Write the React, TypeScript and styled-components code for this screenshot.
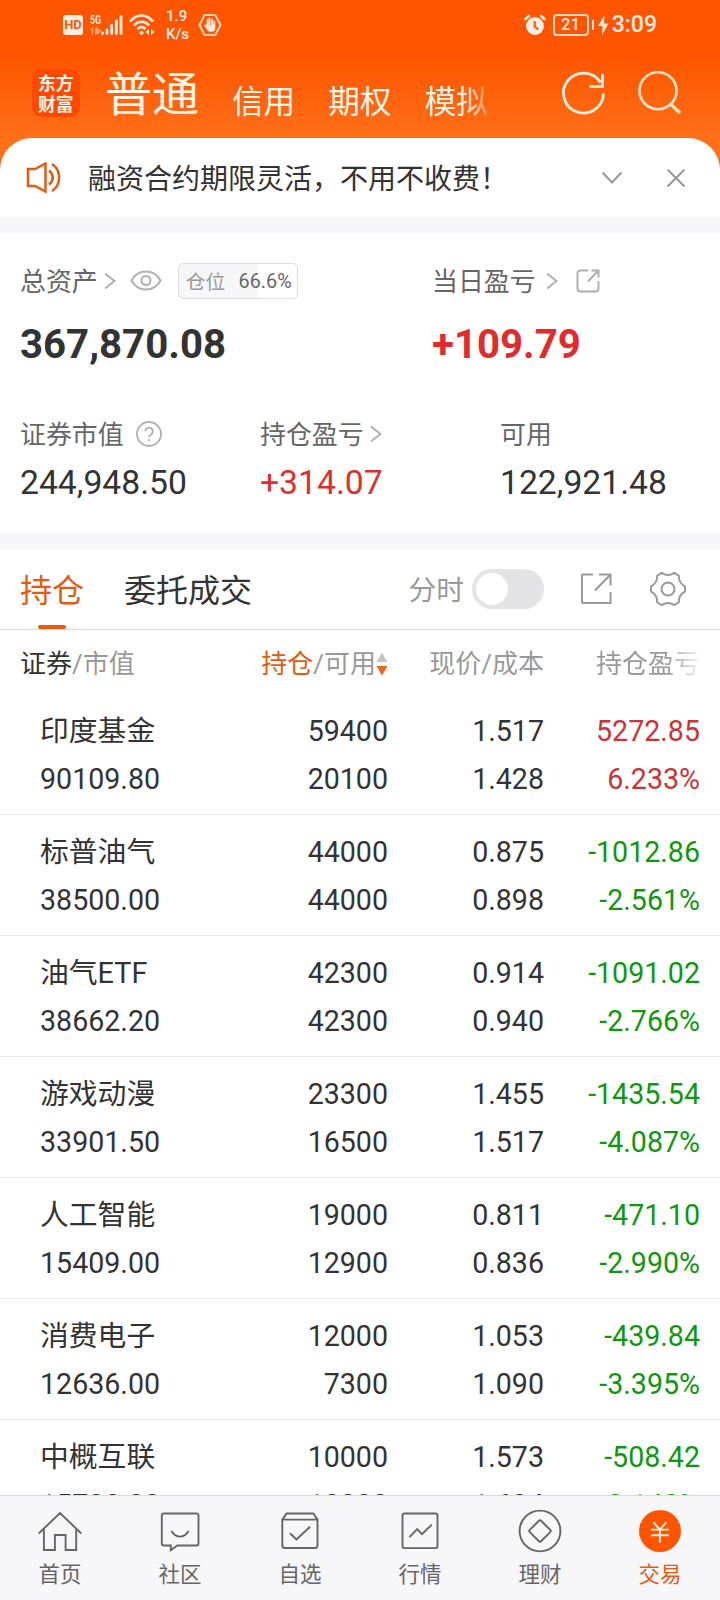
import React from "react";
import styled, { createGlobalStyle, css } from "styled-components";

const ORANGE = "#e65a10";
const RED = "#dd2f2f";
const GREEN = "#0f970f";
const INK = "#333333";
const MUTED = "#666666";
const FAINT = "#999999";

const GlobalStyle = createGlobalStyle`
  * { box-sizing: border-box; }
  body { margin: 0; background: #fff; }
`;

const Screen = styled.div`
  width: 720px;
  height: 1600px;
  overflow: hidden;
  display: flex;
  flex-direction: column;
  background: #fff;
  color: ${INK};
  font-family: Roboto, "Noto Sans CJK SC", sans-serif;
  white-space: nowrap;
`;

const Icon = styled.svg<{ $w: number; $h?: number; $stroke?: string; $sw?: number; $ml?: number }>`
  display: block;
  flex: none;
  width: ${(p) => p.$w}px;
  height: ${(p) => p.$h ?? p.$w}px;
  margin-left: ${(p) => p.$ml ?? 0}px;
  fill: none;
  stroke: ${(p) => p.$stroke ?? "none"};
  stroke-width: ${(p) => p.$sw ?? 2};
`;

/* ---------- header ---------- */

const Header = styled.header`
  flex: none;
  height: 217px;
  display: flex;
  flex-direction: column;
  background: linear-gradient(#ff5500 0, #ff5500 56px, #ff7019 140px, #ff7019 100%);
`;

const StatusBar = styled.div`
  height: 48px;
  display: flex;
  align-items: center;
  padding: 1px 63px 0 63px;
  color: #ffeee2;
`;

const Grow = styled.div`
  flex: 1;
`;

const HdBadge = styled.div`
  width: 20px;
  height: 20px;
  border-radius: 3px;
  background: #ffeee2;
  color: #f4590c;
  font-size: 13px;
  font-weight: 700;
  line-height: 20px;
  text-align: center;
`;

const Signal = styled.div`
  margin-left: 7px;
  width: 34px;
  height: 22px;
  display: flex;
  align-items: flex-end;
`;

const SignalType = styled.div`
  width: 11px;
  height: 22px;
`;

const Generation = styled.div`
  width: 17px;
  height: 12px;
  font-size: 13px;
  font-weight: 700;
  line-height: 12px;
  transform: scaleX(0.68);
  transform-origin: left;
`;

const NetSpeed = styled.div`
  margin-left: 11px;
  width: 22px;
  font-size: 15px;
  font-weight: 500;
  line-height: 18px;
`;

const Battery = styled.div`
  margin-left: 7px;
  width: 36px;
  height: 22px;
  border: 2px solid #ffd9c2;
  border-radius: 4px;
  font-size: 16px;
  font-weight: 500;
  line-height: 18px;
  text-align: center;
  letter-spacing: 0.5px;
`;

const Clock = styled.div`
  margin-left: 2px;
  font-size: 23px;
  font-weight: 500;
  line-height: 30px;
`;

const TopNav = styled.div`
  height: 90px;
  display: flex;
  align-items: flex-start;
  padding-left: 32px;
  color: #fff6ec;
`;

const Logo = styled.div`
  margin-top: 21px;
  width: 48px;
  height: 48px;
  border-radius: 10px;
  background: #ff4800;
  padding: 3px 0 0 6px;
  font-family: "Noto Sans CJK SC", sans-serif;
  font-size: 17.8px;
  font-weight: 700;
  line-height: 20.5px;
`;

const Account = styled.div<{ $active?: boolean; $ml: number; $fade?: boolean }>`
  margin-left: ${(p) => p.$ml}px;
  font-size: ${(p) => (p.$active ? 47 : 31.6)}px;
  line-height: ${(p) => (p.$active ? 93 : 109)}px;
  height: 90px;
  ${(p) =>
    p.$fade &&
    css`
      mask-image: linear-gradient(90deg, #000 60%, rgba(0, 0, 0, 0.3) 100%);
    `}
`;

const NavIcons = styled.div`
  margin-left: auto;
  margin-right: 37px;
  padding-top: 20px;
  display: flex;
  gap: 25px;
`;

const Notice = styled.div`
  height: 79px;
  display: flex;
  align-items: center;
  padding: 0 34px 0 26px;
  border-radius: 32px 32px 0 0;
  background: #fff;
`;

const NoticeText = styled.div`
  margin-left: 26px;
  padding-top: 4px;
  flex: 1;
  font-size: 28px;
  line-height: 40px;
`;

const Band = styled.div`
  flex: none;
  height: 16px;
  background: #f7f7fa;
`;

/* ---------- assets ---------- */

const Assets = styled.section`
  flex: none;
  height: 300px;
  padding: 28px 20px 0;
  display: flex;
  flex-direction: column;
`;

const PrimaryGrid = styled.div`
  display: grid;
  grid-template-columns: 412px 1fr;
  height: 153px;
`;

const SecondaryGrid = styled.div`
  display: grid;
  grid-template-columns: 240px 240px 1fr;
`;

const Label = styled.div`
  display: flex;
  align-items: center;
  height: 40px;
  font-size: 25.9px;
  color: ${MUTED};
`;

const LabelText = styled.span`
  padding-bottom: 3px;
`;

const Total = styled.div<{ $color?: string }>`
  margin-top: 20px;
  font-size: 40.2px;
  font-weight: 700;
  line-height: 48px;
  color: ${(p) => p.$color ?? INK};
`;

const Amount = styled.div<{ $color?: string }>`
  margin-top: 10px;
  font-size: 33.7px;
  line-height: 38px;
  color: ${(p) => p.$color ?? INK};
`;

const Ratio = styled.div`
  margin-left: 16px;
  width: 120px;
  height: 36px;
  display: flex;
  align-items: center;
  justify-content: space-between;
  padding: 0 5px 0 7px;
  border: 1px solid #dfdfe2;
  border-radius: 5px;
  background: linear-gradient(90deg, #f7f7fa 67%, #fff 67%);
  font-size: 19.8px;
`;

const RatioName = styled.span`
  padding-bottom: 2px;
  color: ${FAINT};
`;

/* ---------- tabs ---------- */

const Tabs = styled.div`
  flex: none;
  height: 81px;
  display: flex;
  align-items: center;
  padding: 0 34px 0 20px;
  border-bottom: 1px solid #dcdcdc;
`;

const Tab = styled.div<{ $active?: boolean }>`
  display: flex;
  flex-direction: column;
  align-items: center;
  height: 80px;
  margin-right: 40px;
  font-size: 32px;
  line-height: 84px;
  color: ${(p) => (p.$active ? ORANGE : INK)};
  &::after {
    content: "";
    display: ${(p) => (p.$active ? "block" : "none")};
    flex: none;
    width: 28px;
    height: 4px;
    margin-top: -8px;
    border-radius: 2px;
    background: ${ORANGE};
  }
`;

const SwitchLabel = styled.div`
  padding-top: 4px;
  font-size: 27.8px;
  line-height: 40px;
  color: ${FAINT};
`;

const Toggle = styled.div`
  margin-left: 8px;
  width: 72px;
  height: 40px;
  padding: 4px;
  border-radius: 20px;
  background: #e4e4e6;
`;

const Knob = styled.div`
  width: 32px;
  height: 32px;
  border-radius: 50%;
  background: #fff;
`;

/* ---------- table ---------- */

const Table = styled.section`
  flex: 1;
  min-height: 0;
  overflow: hidden;
`;

const columns = css`
  display: grid;
  grid-template-columns: 1fr 140px 156px 156px;
`;

const HeadRow = styled.div`
  ${columns}
  height: 64px;
  padding: 4px 20px 0;
  font-size: 26px;
  line-height: 60px;
  color: ${FAINT};
`;

const HeadCell = styled.div<{ $fade?: boolean }>`
  display: flex;
  justify-content: flex-end;
  align-items: center;
  &:first-child {
    justify-content: flex-start;
  }
  ${(p) =>
    p.$fade &&
    css`
      mask-image: linear-gradient(90deg, #000 78%, rgba(0, 0, 0, 0.12) 100%);
    `}
`;

const Strong = styled.span<{ $color: string }>`
  color: ${(p) => p.$color};
`;

const Row = styled.div`
  ${columns}
  height: 121px;
  padding: 13px 20px 0 40px;
  border-bottom: 1px solid #e8e8e8;
  font-size: 28.6px;
  line-height: 48px;
`;

const Cell = styled.div<{ $color?: string }>`
  text-align: right;
  color: ${(p) => p.$color ?? INK};
  &:first-child {
    text-align: left;
  }
`;

const Line = styled.div`
  height: 48px;
`;

const Name = styled(Line)`
  font-size: 28.8px;
  line-height: 49px;
`;

/* ---------- bottom navigation ---------- */

const BottomNav = styled.nav`
  flex: none;
  height: 105px;
  display: grid;
  grid-template-columns: repeat(6, 1fr);
  border-top: 1px solid #dcdcdc;
  background: #f7f7fa;
`;

const NavItem = styled.div<{ $active?: boolean }>`
  display: flex;
  flex-direction: column;
  align-items: center;
  padding-top: 11px;
  font-size: 21.5px;
  line-height: 40px;
  color: ${(p) => (p.$active ? ORANGE : MUTED)};
`;

const Chevron = ({ ml }: { ml: number }) => (
  <Icon $w={12} $h={18} $ml={ml} $stroke="#b0b0b0" $sw={2} viewBox="0 0 12 18">
    <path d="M1 1.500 10.500 9 1 16.500" />
  </Icon>
);

/* Six flat lobes joined by shallow concave arcs. */
const polar = (deg: number, r: number) => {
  const a = (deg * Math.PI) / 180;
  return `${(18 + r * Math.cos(a)).toFixed(2)} ${(18 + r * Math.sin(a)).toFixed(2)}`;
};

const gearPath =
  [0, 60, 120, 180, 240, 300]
    .map((d, i) => `${i ? "L" : "M"}${polar(d - 9, 17.2)}L${polar(d + 9, 17.2)}Q${polar(d + 30, 12)} ${polar(d + 51, 17.2)}`)
    .join("") + "Z";

const rows = [
  ["印度基金", "90109.80", "59400", "20100", "1.517", "1.428", "5272.85", "6.233%"],
  ["标普油气", "38500.00", "44000", "44000", "0.875", "0.898", "-1012.86", "-2.561%"],
  ["油气ETF", "38662.20", "42300", "42300", "0.914", "0.940", "-1091.02", "-2.766%"],
  ["游戏动漫", "33901.50", "23300", "16500", "1.455", "1.517", "-1435.54", "-4.087%"],
  ["人工智能", "15409.00", "19000", "12900", "0.811", "0.836", "-471.10", "-2.990%"],
  ["消费电子", "12636.00", "12000", "7300", "1.053", "1.090", "-439.84", "-3.395%"],
  ["中概互联", "15730.00", "10000", "10000", "1.573", "1.624", "-508.42", "-3.140%"],
];

const navItems = [
  {
    name: "首页",
    icon: <path d="M2.700 26.500 24 6l21.300 20.500M7.900 22v21h11V28h10.700v15h10.600V22" />,
  },
  {
    name: "社区",
    icon: (
      <path d="M7.500 6.500h33a2 2 0 0 1 2 2v28a2 2 0 0 1-2 2H21.300l-6.500 4.700v-4.700H7.800a2 2 0 0 1-2-2v-28a2 2 0 0 1 2-2M15.500 24c4 7.500 13 7.500 17 0" />
    ),
  },
  {
    name: "自选",
    icon: (
      <path d="M6.300 12.600h35.200v26a2.400 2.400 0 0 1-2.400 2.400H8.700a2.400 2.400 0 0 1-2.400-2.400zl4.200-6.100h26.800l4.200 6.100M14 26.300l6.500 6.200L34 19.800" />
    ),
  },
  {
    name: "行情",
    icon: (
      <>
        <rect x="6.500" y="6.500" width="35" height="34.600" rx="2" />
        <path d="m13.500 30.200 7.700-8 4.800 5L35.800 17.600" />
      </>
    ),
  },
  {
    name: "理财",
    icon: (
      <>
        <circle cx="24" cy="24" r="20.400" />
        <rect x="16" y="16" width="16" height="16" rx="1.500" transform="rotate(45 24 24)" />
      </>
    ),
  },
  {
    name: "交易",
    icon: (
      <>
        <circle cx="24" cy="24" r="21" fill="#ff5500" stroke="none" />
        <path stroke="#fff0e2" d="m17.500 15.200 6.300 7.400 6.500-7.400M23.900 22.600v12.800M15.200 22.600h17.600M15.200 28.300h17.600" />
      </>
    ),
  },
];

export default function App() {
  return (
    <Screen>
      <GlobalStyle />
      <Header>
        <StatusBar>
          <HdBadge>HD</HdBadge>
          <Signal>
            <SignalType>
              <Generation>5G</Generation>
              <Icon $w={11} $h={10} viewBox="0 0 11 10">
                <path stroke="#ffa679" strokeWidth="1.600" d="M2.500 1.500v7M.5 4l2-2M6 1.500v7M7 2.500l3.500 2.500L7 7.500z" />
              </Icon>
            </SignalType>
            <Icon $w={23} $h={22} viewBox="11 0 23 22">
              <path stroke="#ffeee2" strokeWidth="2.800" strokeLinecap="round" d="M12.500 19v.5M17 16v3.500M21.700 11.500v8M26.300 7v12.500M31 2.500v17" />
            </Icon>
          </Signal>
          <Icon $w={26} $h={22} $ml={5} viewBox="0 0 26 22" $stroke="#ffeee2" $sw={2.6}>
            <path d="M1 7.500C8-.5 17-.5 24 7.500M5 11.500c4.500-5 10.500-5 15 0M8.500 15c2.500-2.700 5.500-2.700 8 0" />
            <circle cx="12.500" cy="18.800" r="2" fill="#ffeee2" stroke="none" />
            <path stroke="none" fill="#ffeee2" d="m16.500 18 3.500-3v6zm9 0-3.500-3v6z" />
          </Icon>
          <NetSpeed>
            1.9
            <br />
            K/s
          </NetSpeed>
          <Icon $w={24} $ml={10} viewBox="0 0 24 24">
            <path d="M6.500 2h10.800l5.200 10-5.200 10H6.500L1.500 12z" stroke="#ffd2b5" strokeWidth="2" strokeLinejoin="round" />
            <path
              d="M7 12.500 9.500 15V7M11.500 14V5.500M14 14V6.500M16.300 14V8.500"
              stroke="#ffeee2"
              strokeWidth="1.800"
              strokeLinecap="round"
            />
            <path d="M8.600 12h8.600v3.500c0 2-1.500 3.300-3.500 3.300h-1.500c-1.500 0-2.500-.8-3.600-2.500z" fill="#ffeee2" />
          </Icon>
          <Grow />
          <Icon $w={22} viewBox="0 0 22 22">
            <circle cx="11" cy="12" r="9" fill="#ffeee2" />
            <path d="M1.500 5 5 2M20.500 5 17 2" stroke="#ffeee2" strokeWidth="2.600" strokeLinecap="round" />
            <path d="M10.700 7v5.500l3.500 3" stroke="#ff5500" strokeWidth="2" />
          </Icon>
          <Battery>21</Battery>
          <Icon $w={20} $h={22} $ml={1} viewBox="0 0 20 22">
            <path d="M3 6v10" stroke="#ffe2cf" strokeWidth="2" />
            <path d="M14.500 1 8 12h4.500L12 21l6.500-11.500H14z" fill="#ffeee2" />
          </Icon>
          <Clock>3:09</Clock>
        </StatusBar>
        <TopNav>
          <Logo>
            东方
            <br />
            财富
          </Logo>
          <Account $active $ml={25}>普通</Account>
          <Account $ml={33}>信用</Account>
          <Account $ml={33}>期权</Account>
          <Account $ml={33} $fade>模拟</Account>
          <NavIcons>
            <Icon $w={50} viewBox="0 0 50 50" $stroke="#fff3e6" $sw={2.7}>
              <path d="M45.500 25.500A20 20 0 1 1 42.500 14.500M44.500 6v12.500H31.500" />
            </Icon>
            <Icon $w={50} viewBox="0 0 50 50" $stroke="#ffe3ca" $sw={2.6}>
              <circle cx="25" cy="22.700" r="18.500" />
              <path d="M37.500 36l9.500 9" strokeWidth="3.200" />
            </Icon>
          </NavIcons>
        </TopNav>
        <Notice>
          <Icon $w={36} $h={31} viewBox="0 0 36 31" $stroke={ORANGE} $sw={2.5}>
            <path d="M2 7h7l10.500-5.500v28L9 24H2zM23 8.500c5 4 5 10 0 14M26 2c9.500 6 9.500 21 0 27" />
          </Icon>
          <NoticeText>融资合约期限灵活，不用不收费！</NoticeText>
          <Icon $w={22} $h={14} viewBox="0 0 22 14" $stroke={FAINT} $sw={2}>
            <path d="m1.500 1.500 9.500 10 9.500-10" />
          </Icon>
          <Icon $w={20} $ml={43} viewBox="0 0 20 20" $stroke={FAINT} $sw={2}>
            <path d="m1.500 1.500 17 17m0-17-17 17" />
          </Icon>
        </Notice>
      </Header>
      <Band />
      <Assets>
        <PrimaryGrid>
          <div>
            <Label>
              <LabelText>总资产</LabelText>
              <Chevron ml={6} />
              <Icon $w={32} $h={22} $ml={14} viewBox="0 0 32 22" $stroke="#b0b0b0" $sw={2}>
                <path d="M1.500 10.500C8-1.500 24-1.500 30.500 10.500 24 22.500 8 22.500 1.500 10.500z" />
                <circle cx="16" cy="10.500" r="4.500" />
              </Icon>
              <Ratio>
                <RatioName>仓位</RatioName>
                <span>66.6%</span>
              </Ratio>
            </Label>
            <Total>367,870.08</Total>
          </div>
          <div>
            <Label>
              <LabelText>当日盈亏</LabelText>
              <Chevron ml={10} />
              <Icon $w={24} $ml={18} viewBox="0 0 24 24" $stroke="#b0b0b0" $sw={2}>
                <path d="M12 1.500H4.500a3 3 0 0 0-3 3v15a3 3 0 0 0 3 3h15a3 3 0 0 0 3-3V12M15.500 1.500h7v7M22.500 1.500 12 12.500" />
              </Icon>
            </Label>
            <Total $color="#e22b2b">+109.79</Total>
          </div>
        </PrimaryGrid>
        <SecondaryGrid>
          <div>
            <Label>
              <LabelText>证券市值</LabelText>
              <Icon $w={26} $ml={12} viewBox="0 0 26 26" $stroke="#b0b0b0" $sw={1.8}>
                <circle cx="13" cy="13" r="12" />
                <path d="M9.300 10.200a3.700 3.700 0 1 1 5.700 3.200c-1.300.9-2 1.500-2 3.100M13 18.300v2" />
              </Icon>
            </Label>
            <Amount>244,948.50</Amount>
          </div>
          <div>
            <Label>
              <LabelText>持仓盈亏</LabelText>
              <Chevron ml={6} />
            </Label>
            <Amount $color={RED}>+314.07</Amount>
          </div>
          <div>
            <Label>
              <LabelText>可用</LabelText>
            </Label>
            <Amount>122,921.48</Amount>
          </div>
        </SecondaryGrid>
      </Assets>
      <Band />
      <Tabs>
        <Tab $active>持仓</Tab>
        <Tab>委托成交</Tab>
        <Grow />
        <SwitchLabel>分时</SwitchLabel>
        <Toggle>
          <Knob />
        </Toggle>
        <Icon $w={32} $ml={36} viewBox="0 0 32 32" $stroke={FAINT} $sw={2}>
          <path d="M13 1.500H3a1 1 0 0 0-1 1V29a1 1 0 0 0 1 1h27.500V19M19 1.500h11.500v11M30.500 1.500 15 17.500" />
        </Icon>
        <Icon $w={36} $ml={38} viewBox="0 0 36 36" $stroke={FAINT} $sw={2}>
          <path d={gearPath} strokeLinejoin="round" />
          <circle cx="18" cy="18" r="6.500" />
        </Icon>
      </Tabs>
      <Table>
        <HeadRow>
          <HeadCell>
            <Strong $color={INK}>证券</Strong>/市值
          </HeadCell>
          <HeadCell>
            <Strong $color={ORANGE}>持仓</Strong>/可用
            <Icon $w={12} $h={24} viewBox="0 0 12 24">
              <path d="m6 1 5.500 9H.5z" fill="#c4c4c4" />
              <path d="m6 23.500 5.500-9.500H.5z" fill="#ec6519" />
            </Icon>
          </HeadCell>
          <HeadCell>现价/成本</HeadCell>
          <HeadCell $fade>持仓盈亏</HeadCell>
        </HeadRow>
        {rows.map(([name, value, held, usable, price, cost, pnl, pct]) => {
          const tone = pnl.startsWith("-") ? GREEN : "#c93434";
          return (
            <Row key={name}>
              <Cell>
                <Name>{name}</Name>
                <Line>{value}</Line>
              </Cell>
              <Cell>
                <Line>{held}</Line>
                <Line>{usable}</Line>
              </Cell>
              <Cell>
                <Line>{price}</Line>
                <Line>{cost}</Line>
              </Cell>
              <Cell $color={tone}>
                <Line>{pnl}</Line>
                <Line>{pct}</Line>
              </Cell>
            </Row>
          );
        })}
      </Table>
      <BottomNav>
        {navItems.map((item) => (
          <NavItem key={item.name} $active={item.name === "交易"}>
            <Icon $w={48} viewBox="0 0 48 48" $stroke={MUTED} $sw={1.9}>
              {item.icon}
            </Icon>
            {item.name}
          </NavItem>
        ))}
      </BottomNav>
    </Screen>
  );
}
